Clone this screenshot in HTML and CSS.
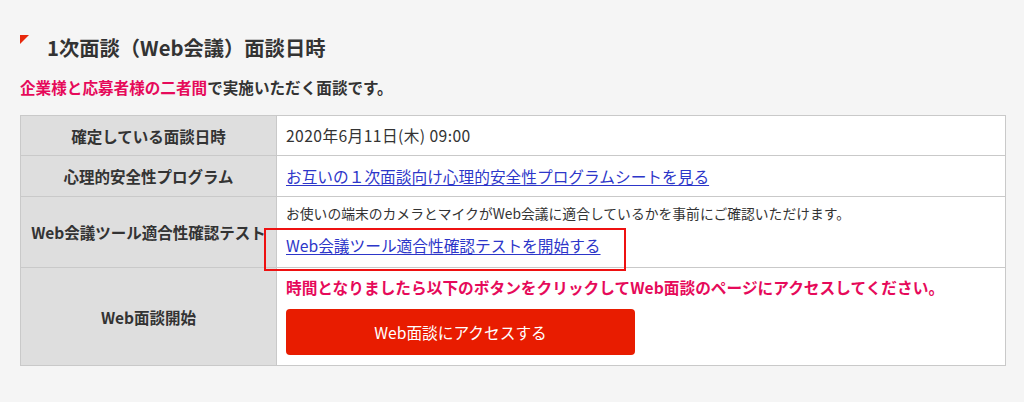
FILE: index.html
```html
<!DOCTYPE html>
<html lang="ja">
<head>
<meta charset="utf-8">
<title>1次面談（Web会議）面談日時</title>
<link rel="stylesheet" href="styles.css">
</head>
<body>
<main class="page">
  <h2 class="heading">1次面談（Web会議）面談日時</h2>
  <p class="lead"><span class="pink">企業様と応募者様の二者間</span>で実施いただく面談です。</p>
  <div class="info">
    <div class="th row1">確定している面談日時</div>
    <div class="td row1"><span class="date">2020年6月11日(木) 09:00</span></div>

    <div class="th row2">心理的安全性プログラム</div>
    <div class="td row2"><a class="link" href="#">お互いの１次面談向け心理的安全性プログラムシートを見る</a></div>

    <div class="th row3">Web会議ツール適合性確認テスト</div>
    <div class="td row3 annotated">
      <p class="note">お使いの端末のカメラとマイクがWeb会議に適合しているかを事前にご確認いただけます。</p>
      <a class="link" href="#">Web会議ツール適合性確認テストを開始する</a>
      <span class="mark"></span>
    </div>

    <div class="th row4">Web面談開始</div>
    <div class="td row4">
      <p class="alert">時間となりましたら以下のボタンをクリックしてWeb面談のページにアクセスしてください。</p>
      <a class="btn" href="#">Web面談にアクセスする</a>
    </div>
  </div>
</main>
</body>
</html>
```

FILE: styles.css
```css
* { box-sizing: border-box; }
html, body {
  margin: 0;
  background: #f5f5f5;
}
body {
  font-family: "Noto Sans CJK JP", "Noto Sans", sans-serif;
  color: #333;
  font-size: 15.7px;
}
.page {
  padding: 35px 19px 0 20px;
}
.heading {
  position: relative;
  margin: 0;
  padding-left: 27px;
  font-size: 20.3px;
  line-height: 25px;
  font-weight: 700;
  color: #333;
}
.heading::before {
  content: "";
  position: absolute;
  left: 0;
  top: 0;
  width: 0;
  height: 0;
  border-top: 9px solid #e8280c;
  border-right: 9px solid transparent;
}
.lead {
  margin: 15px 0 0;
  font-size: 15.6px;
  line-height: 24px;
  font-weight: 700;
}
.pink { color: #e60a5a; }
.info {
  margin-top: 16px;
  width: 986px;
  display: grid;
  grid-template-columns: 255px 1fr;
  grid-template-rows: 39px 40px 70px 97px;
  gap: 1px;
  background: #c9c9c9;
  border: 1px solid #c9c9c9;
}
.th {
  background: #dedede;
  display: flex;
  align-items: center;
  justify-content: center;
  font-weight: 700;
  font-size: 15.5px;
  text-align: center;
  white-space: nowrap;
}
.td {
  background: #fff;
  padding: 0 9px;
  display: flex;
  flex-direction: column;
  justify-content: center;
  align-items: flex-start;
}
.date {
  letter-spacing: 0.4px;
}
.link {
  color: #2d36c9;
  text-decoration: underline;
  text-underline-offset: 2px;
  line-height: 25px;
}
.row3.td {
  justify-content: flex-start;
  padding-top: 6px;
}
.note {
  margin: 0 0 10px;
  font-size: 13.8px;
  line-height: 20px;
}
.annotated { position: relative; }
.mark {
  position: absolute;
  left: -13px;
  top: 31px;
  width: 362px;
  height: 43px;
  border: 2px solid #ee1111;
  pointer-events: none;
}
.row4.td {
  justify-content: flex-start;
  padding-top: 8px;
}
.alert {
  margin: 0 0 9px;
  color: #e60a5a;
  font-weight: 700;
  font-size: 15.7px;
  line-height: 24px;
}
.btn {
  display: flex;
  align-items: center;
  justify-content: center;
  width: 349px;
  height: 46px;
  background: #e81c00;
  color: #fff;
  border-radius: 4px;
  text-decoration: none;
  font-size: 15.7px;
}
```
